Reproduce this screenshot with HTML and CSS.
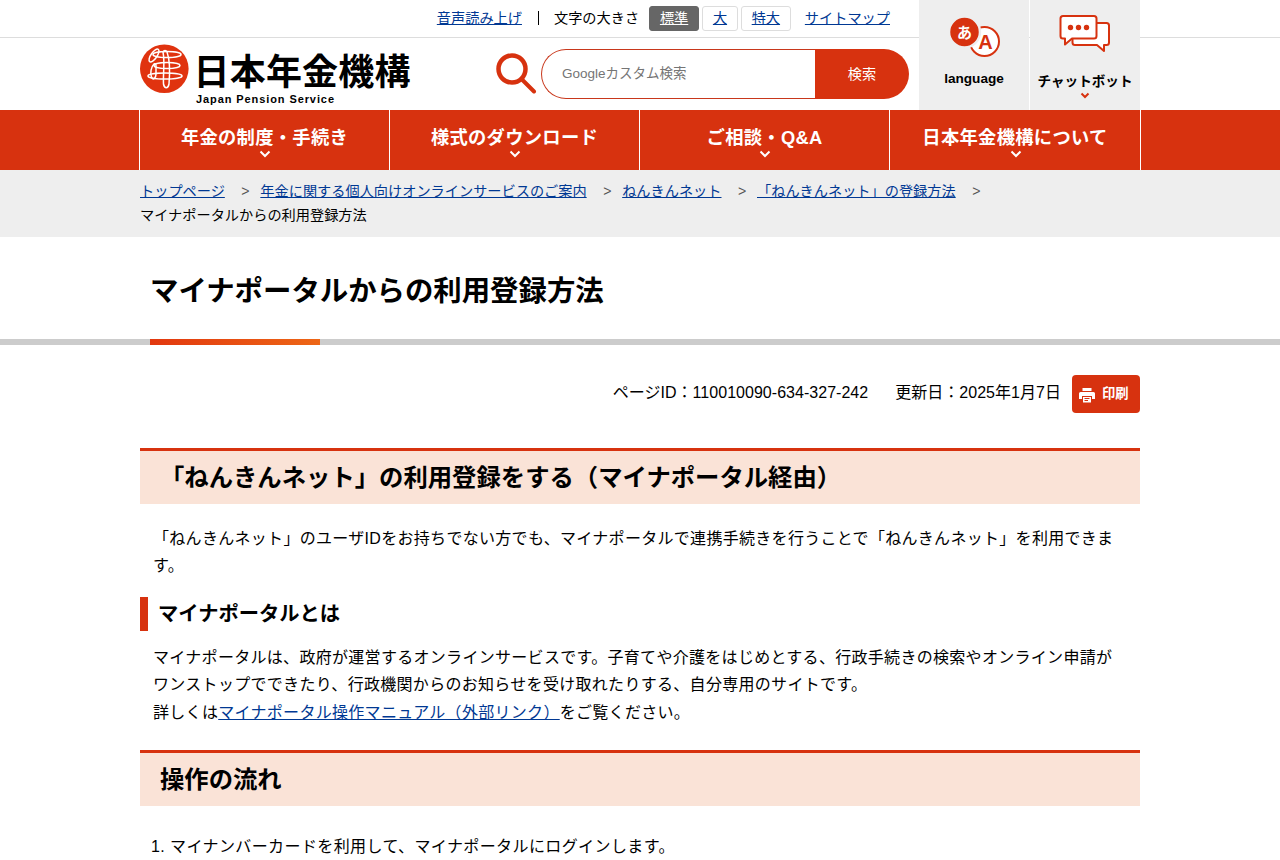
FILE: index.html
```html
<!DOCTYPE html>
<html lang="ja">

<head>
    <meta charset="utf-8" />
    <title>マイナポータルからの利用登録方法</title>
    <link rel="stylesheet" href="styles.css">
</head>

<body>
    <!-- Header -->
    <header class="header">
        <div class="header-main">
            <div class="tools">
                <a href="#" class="voice">音声読み上げ</a>
                <span class="size-label">文字の大きさ</span>
                <ul class="sizes">
                    <li><a href="#" class="active">標準</a></li>
                    <li><a href="#">大</a></li>
                    <li><a href="#">特大</a></li>
                </ul>
                <a href="#">サイトマップ</a>
            </div>
            <div class="brand">
                <svg class="logo" width="272" height="64" viewBox="0 0 272 64">
                    <circle cx="24.300" cy="25.700" r="24.300" fill="#e0330f" />
                    <g fill="none" stroke="#fff" stroke-width="1.500">
                        <ellipse cx="14" cy="12.500" rx="3" ry="7.500" transform="rotate(35 14 12.500)" />
                        <ellipse cx="27" cy="11.500" rx="14" ry="3" />
                        <ellipse cx="27" cy="22.500" rx="13" ry="3" />
                        <ellipse cx="25" cy="33" rx="17" ry="3" />
                        <path d="M14 21c-3 3-4 9-2.500 13s4.500 1 4.500-3v-8q0-3-2-2z" />
                        <path d="M23 9c2 9 0 22 .5 32 1 5 4.500 5 5.500 0 1-12 1-24-2-32-1-2-3-2-4 0z" />
                    </g>
                    <text class="logo-ja" x="53.500" y="41.500" textLength="217">日本年金機構</text>
                    <text class="logo-en" x="56" y="59.500" textLength="138">Japan Pension Service</text>
                </svg>
                <form class="search">
                    <svg width="41" height="42" viewBox="0 0 41 42" fill="none" stroke="#d7320f">
                        <circle cx="16" cy="17" r="13.500" stroke-width="4.500" />
                        <path d="M26 27.500L38 39.500" stroke-width="4" stroke-linecap="round" />
                    </svg>
                    <input type="text" placeholder="Googleカスタム検索">
                    <button type="button">検索</button>
                </form>
            </div>
        </div>
        <a href="#" class="tile language">
            <svg width="52" height="42" viewBox="0 0 52 42">
                <circle cx="35.500" cy="24.500" r="14.500" fill="#fff" stroke="#d7320f" stroke-width="2" />
                <circle cx="15.500" cy="15" r="15.500" fill="#d7320f" stroke="#eee" stroke-width="2.500" />
                <text class="mark-ja" x="15.500" y="20.500">あ</text>
                <text class="mark-en" x="36.500" y="31.500">A</text>
            </svg>
            <span>language</span>
        </a>
        <a href="#" class="tile chatbot">
            <svg width="52" height="40" viewBox="0 0 52 40" fill="#fff" stroke="#d7320f" stroke-width="2" stroke-linejoin="round">
                <path d="M17 8h30.500q2.500 0 2.500 2.500v17q0 2.500-2.500 2.500H45v6l-7-6H16q-2.500 0-2.500-2.500V8z" />
                <path d="M4 1h31q2.500 0 2.500 2.500V21q0 2.500-2.500 2.500H13l-7 6v-6H4q-2.500 0-2.500-2.500V3.500Q1.500 1 4 1z" />
                <g fill="#d7320f" stroke="none">
                    <circle cx="11.500" cy="12.500" r="2.700" />
                    <circle cx="19.500" cy="12.500" r="2.700" />
                    <circle cx="27.500" cy="12.500" r="2.700" />
                </g>
            </svg>
            <span>チャットボット</span>
            <svg class="arrow" width="10" height="7" viewBox="0 0 10 7"><path d="M1.500 1.500L5 5l3.500-3.500" /></svg>
        </a>
    </header>

    <!-- Global navigation -->
    <nav class="gnav">
        <ul>
            <li><a href="#">年金の制度・手続き</a><svg class="arrow" width="12" height="8" viewBox="0 0 12 8"><path d="M1.500 1.500L6 6l4.500-4.500" /></svg></li>
            <li><a href="#">様式のダウンロード</a><svg class="arrow" width="12" height="8" viewBox="0 0 12 8"><path d="M1.500 1.500L6 6l4.500-4.500" /></svg></li>
            <li><a href="#">ご相談・Q&amp;A</a><svg class="arrow" width="12" height="8" viewBox="0 0 12 8"><path d="M1.500 1.500L6 6l4.500-4.500" /></svg></li>
            <li><a href="#">日本年金機構について</a><svg class="arrow" width="12" height="8" viewBox="0 0 12 8"><path d="M1.500 1.500L6 6l4.500-4.500" /></svg></li>
        </ul>
    </nav>

    <!-- Breadcrumb -->
    <div class="breadcrumb">
        <ol>
            <li><a href="#">トップページ</a></li>
            <li><a href="#">年金に関する個人向けオンラインサービスのご案内</a></li>
            <li><a href="#">ねんきんネット</a></li>
            <li><a href="#">「ねんきんネット」の登録方法</a></li>
            <li>マイナポータルからの利用登録方法</li>
        </ol>
    </div>

    <div class="page-title">
        <h1>マイナポータルからの利用登録方法</h1>
        <div class="title-line"></div>
    </div>

    <!-- Contents -->
    <main class="contents">
        <div class="page-info">
            <span class="page-id">ページID：110010090-634-327-242</span>
            <span class="date">更新日：2025年1月7日</span>
            <a href="#" class="print">
                <svg width="16" height="15" viewBox="0 0 16 15" fill="#fff">
                    <path d="M3.500 0h9v3h-9zM1.500 4h13q1.500 0 1.500 1.500V11h-3V8H3v3H0V5.500Q0 4 1.500 4z" />
                    <path d="M4 9h8v5.500H4z" />
                    <path d="M5.500 10.500h5M5.500 12.500h3.500" stroke="#d7320f" />
                </svg>
                印刷
            </a>
        </div>

        <h2>「ねんきんネット」の利用登録をする（マイナポータル経由）</h2>
        <p>「ねんきんネット」のユーザIDをお持ちでない方でも、マイナポータルで連携手続きを行うことで「ねんきんネット」を利用できます。</p>

        <h3>マイナポータルとは</h3>
        <p>マイナポータルは、政府が運営するオンラインサービスです。子育てや介護をはじめとする、行政手続きの検索やオンライン申請がワンストップでできたり、行政機関からのお知らせを受け取れたりする、自分専用のサイトです。<br>詳しくは<a href="#">マイナポータル操作マニュアル（外部リンク）</a>をご覧ください。</p>

        <h2>操作の流れ</h2>
        <ol class="steps">
            <li>マイナンバーカードを利用して、マイナポータルにログインします。</li>
        </ol>
    </main>
</body>

</html>
```
FILE: styles.css
```css
* {
    box-sizing: border-box;
}

html {
    overflow: hidden;
}

body {
    margin: 0;
    height: 860px;
    overflow: hidden;
    background: #fff;
    color: #000;
    font-family: "Liberation Sans", "Noto Sans CJK JP", sans-serif;
    font-size: 16px;
    letter-spacing: 0.3px;
}

a {
    color: #003893;
}

ul,
ol {
    margin: 0;
    padding: 0;
    list-style: none;
}

/* header */
.header {
    display: flex;
    height: 110px;
    padding: 0 140px;
    background: linear-gradient(#ddd, #ddd) 0 37px / 100% 1px no-repeat;
    letter-spacing: 0;
}

.header-main {
    width: 779px;
}

.tools {
    display: flex;
    align-items: center;
    justify-content: flex-end;
    height: 37px;
    padding-right: 29px;
    font-size: 14.2px;
    line-height: 20px;
}

.tools > * {
    margin-top: -2px;
}

.voice {
    margin-right: 16px;
}

.size-label {
    position: relative;
    padding-left: 16px;
    margin-right: 10px;
}

.size-label::before {
    content: "";
    position: absolute;
    left: 0;
    top: 3px;
    width: 1px;
    height: 14px;
    background: #000;
}

.tools .sizes {
    display: flex;
    gap: 3px;
    margin: 0 14px 0 0;
}

.sizes a {
    display: block;
    height: 25px;
    padding: 0 9.8px;
    border: 1px solid #ddd;
    border-radius: 3px;
    line-height: 23px;
}

.sizes .active {
    border-color: #666;
    background: #666;
    color: #fff;
}

.brand {
    display: flex;
    justify-content: space-between;
    padding: 6px 10px 0 0;
}

.logo-ja {
    font-family: "Noto Sans CJK JP", sans-serif;
    font-size: 36px;
    font-weight: bold;
}

.logo-en {
    font-size: 11px;
    font-weight: bold;
}

.search {
    display: flex;
    padding-top: 6px;
}

.search svg {
    margin: 3px 4px 0 0;
}

.search input {
    width: 274px;
    height: 50px;
    padding: 0 20px 2px;
    border: 1px solid #c8371b;
    border-right: 0;
    border-radius: 25px 0 0 25px;
    font-family: inherit;
    font-size: 13.5px;
}

.search button {
    width: 94px;
    height: 50px;
    padding: 0 0 3px;
    border: 0;
    border-radius: 0 25px 25px 0;
    background: #d7320f;
    color: #fff;
    font-family: inherit;
    font-size: 14.2px;
}

.tile {
    display: flex;
    flex-direction: column;
    align-items: center;
    width: 110px;
    background: #eee;
    color: #000;
    font-size: 13.6px;
    font-weight: bold;
    line-height: 20px;
    text-decoration: none;
    white-space: nowrap;
}

.language {
    padding: 17px 0 0 1px;
}

.language span {
    margin: 10px 1px 0 0;
}

.chatbot {
    margin-left: 1px;
    padding-top: 15px;
}

.chatbot span {
    margin-top: 17px;
}

.mark-ja,
.mark-en {
    font-weight: bold;
    text-anchor: middle;
}

.mark-ja {
    fill: #fff;
    font-size: 15px;
}

.mark-en {
    fill: #d7320f;
    font-size: 20px;
}

.arrow {
    fill: none;
    stroke: #d7320f;
    stroke-width: 2;
}

/* global navigation */
.gnav {
    height: 60px;
    background: #d7320f;
}

.gnav ul {
    display: flex;
    width: 1002px;
    margin: 0 auto;
    border-left: 1px solid #fff;
}

.gnav li {
    display: flex;
    flex-direction: column;
    align-items: center;
    width: 250px;
    height: 60px;
    padding-top: 15px;
    border-right: 1px solid #fff;
}

.gnav li:last-child {
    width: 251px;
}

.gnav a {
    color: #fff;
    font-size: 18.3px;
    font-weight: bold;
    line-height: 25px;
    text-decoration: none;
}

.gnav .arrow {
    margin-left: 1px;
    stroke: #fff;
}

/* breadcrumb */
.breadcrumb {
    height: 67px;
    padding: 9px 140px 0;
    background: #eee;
    font-size: 14.2px;
    letter-spacing: 0;
    line-height: 24px;
}

.breadcrumb ol {
    display: flex;
    flex-wrap: wrap;
}

.breadcrumb li:not(:last-child)::after {
    content: ">";
    display: inline-block;
    width: 19px;
    padding-left: 16.5px;
    color: #555;
}

.breadcrumb li:last-child {
    width: 100%;
}

.page-title {
    height: 108px;
    padding-top: 31px;
}

h1 {
    margin: 0;
    padding: 0 150px;
    font-size: 28.4px;
    letter-spacing: 0;
    line-height: 46px;
}

.title-line {
    height: 6px;
    margin-top: 25px;
    background: linear-gradient(to right, #e2380f, #ed6616) 150px 0 / 170px 6px no-repeat #ccc;
}

/* contents */
.contents {
    width: 1000px;
    margin: 0 auto;
}

.page-info {
    display: flex;
    justify-content: flex-end;
    height: 38px;
    margin: 30px 0 35px;
    letter-spacing: 0.03px;
    line-height: 36px;
}

.date {
    margin: 0 11px 0 27px;
}

.print {
    display: flex;
    align-items: center;
    gap: 7px;
    width: 68px;
    padding-left: 7px;
    border-radius: 4px;
    background: #d7320f;
    color: #fff;
    font-size: 13.3px;
    font-weight: bold;
    text-decoration: none;
}

.print svg {
    margin-top: 2px;
}

h2 {
    height: 56px;
    margin: 0;
    padding: 0 20px;
    border-top: 3px solid #d7320f;
    background: #fae3d7;
    font-size: 24.35px;
    letter-spacing: 0;
    line-height: 54px;
}

h3 {
    height: 34px;
    margin: 17px 0 13px;
    padding-left: 10px;
    border-left: 8px solid #d7320f;
    font-size: 20.3px;
    letter-spacing: 0;
    line-height: 35px;
}

p {
    margin: 21px 20px 17px 13px;
    line-height: 27.4px;
}

h3 + p {
    margin-top: 13px;
    margin-bottom: 24px;
}

.steps {
    margin: 27px 0 0 30px;
    list-style: decimal;
    letter-spacing: 0.4px;
    line-height: 27.4px;
}
```
